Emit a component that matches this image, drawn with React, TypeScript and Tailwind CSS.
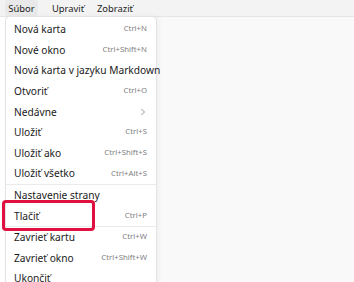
import React from "react";

type Item = { label: string; shortcut?: string; sub?: boolean; sepBefore?: boolean; highlight?: boolean };

const items: Item[] = [
  { label: "Nová karta", shortcut: "Ctrl+N" },
  { label: "Nové okno", shortcut: "Ctrl+Shift+N" },
  { label: "Nová karta v jazyku Markdown" },
  { label: "Otvoriť", shortcut: "Ctrl+O" },
  { label: "Nedávne", sub: true },
  { label: "Uložiť", shortcut: "Ctrl+S" },
  { label: "Uložiť ako", shortcut: "Ctrl+Shift+S" },
  { label: "Uložiť všetko", shortcut: "Ctrl+Alt+S" },
  { label: "Nastavenie strany", sepBefore: true },
  { label: "Tlačiť", shortcut: "Ctrl+P", highlight: true },
  { label: "Zavrieť kartu", shortcut: "Ctrl+W", sepBefore: true },
  { label: "Zavrieť okno", shortcut: "Ctrl+Shift+W" },
  { label: "Ukončiť" },
];

export default function App() {
  return (
    <div
      className="w-[354px] h-[282px] overflow-hidden bg-[#f9f9f9] flex flex-col text-[#1b1b1b]"
      style={{ fontFamily: '"Noto Sans", "Open Sans", sans-serif' }}
    >
      <div className="h-[17px] shrink-0 bg-[#f3f3f3] border-b border-[#e5e5e5] flex items-stretch pl-[5px] text-[9.4px] leading-none">
        <div className="w-[33px] bg-[#e9e9e9] rounded-[3px] flex items-center justify-center pt-px">Súbor</div>
        <div className="ml-[14px] w-[45px] flex items-center pt-px">Upraviť</div>
        <div className="flex items-center pt-px">Zobraziť</div>
      </div>
      <div className="flex-1 flex relative">
        <div className="w-[5px] bg-white" />
        <div className="w-[152px] -mt-px bg-white border border-[#e3e3e3] rounded-t-[5px] pt-[2px] flex flex-col shadow-[2px_0_4px_rgba(0,0,0,0.04)] z-10">
          {items.map((it, i) => (
            <React.Fragment key={i}>
              {it.sepBefore && <div className="h-px bg-[#ebebeb] shrink-0" />}
              <div className="relative h-[20.6px] shrink-0 flex items-center pl-[8px] pr-[9px]">
                <span className="text-[10.2px] leading-none whitespace-nowrap">{it.label}</span>
                <span className="ml-auto text-[7.8px] leading-none text-[#808080] whitespace-nowrap">
                  {it.shortcut}
                  {it.sub && (
                    <svg width="6" height="8" viewBox="0 0 6 8" className="mr-[1px]">
                      <path d="M1.5 1 L4.5 4 L1.5 7" fill="none" stroke="#8a8a8a" strokeWidth="0.9" />
                    </svg>
                  )}
                </span>
                {it.highlight && (
                  <div className="absolute left-[-4px] top-[-5px] w-[93px] h-[31px] border-[3px] border-[#e0103f] rounded-[4px]" />
                )}
              </div>
            </React.Fragment>
          ))}
        </div>
        <div className="flex-1" />
      </div>
    </div>
  );
}
